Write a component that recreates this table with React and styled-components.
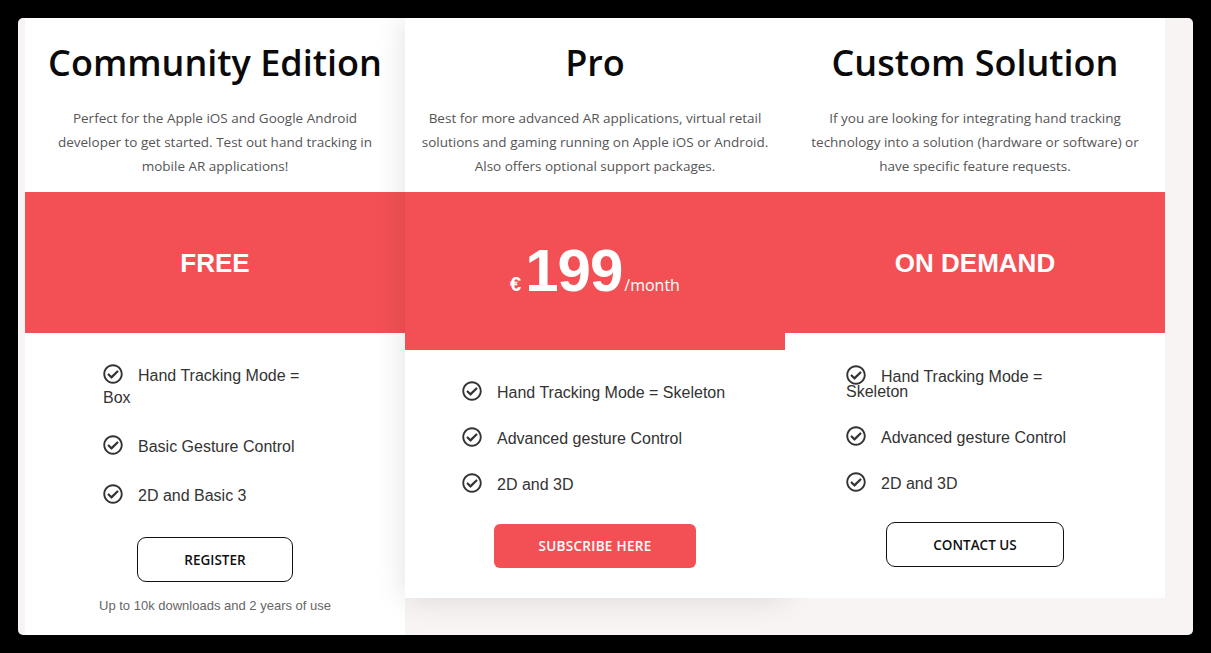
import React from "react";
import styled, { createGlobalStyle } from "styled-components";
import { FaRegCheckCircle } from "react-icons/fa";

const GlobalStyle = createGlobalStyle`
  html, body {
    margin: 0;
    padding: 0;
    background: #000;
  }
  * {
    box-sizing: border-box;
  }
`;

const Frame = styled.div`
  margin: 18px;
  width: 1175px;
  height: 617px;
  border-radius: 5px;
  background: #f8f4f4;
  overflow: hidden;
  display: flex;
  align-items: flex-start;
  padding-left: 7px;
`;

const Card = styled.div`
  position: relative;
  z-index: ${({ $z }) => $z || 0};
  width: 380px;
  flex-shrink: 0;
  align-self: ${({ $stretch }) => ($stretch ? "stretch" : "flex-start")};
  background: #fff;
  display: flex;
  flex-direction: column;
  align-items: center;
  padding: 19px 0 ${({ $pb }) => $pb || 30}px;
  box-shadow: ${({ $raised }) =>
    $raised ? "0 0 30px rgba(0, 0, 0, 0.12)" : "none"};

  & > * {
    flex-shrink: 0;
  }
`;

const Title = styled.h2`
  margin: 0;
  font-family: "Open Sans", sans-serif;
  font-weight: 600;
  font-size: 36px;
  line-height: 52px;
  color: #0a0a0a;
  white-space: nowrap;
`;

const Description = styled.p`
  margin: 17px 0 0;
  height: 72px;
  font-family: "Open Sans", sans-serif;
  font-weight: 400;
  font-size: 13.5px;
  line-height: 24px;
  color: #555;
  text-align: center;
  white-space: nowrap;
`;

const Band = styled.div`
  margin-top: 14px;
  align-self: stretch;
  height: ${({ $h }) => $h}px;
  background: #f35055;
  display: flex;
  align-items: center;
  justify-content: center;
  color: #fff;
`;

const BandLabel = styled.div`
  font-family: "Liberation Sans", Arial, sans-serif;
  font-weight: 700;
  font-size: 26px;
  line-height: 30px;
`;

const PriceRow = styled.div`
  display: flex;
  align-items: baseline;
  font-family: "Liberation Sans", Arial, sans-serif;
`;

const Currency = styled.span`
  font-weight: 700;
  font-size: 20px;
  margin-right: 4px;
`;

const Amount = styled.span`
  font-weight: 700;
  font-size: 60px;
  line-height: 1;
  letter-spacing: -1px;
`;

const Period = styled.span`
  font-family: "Open Sans", sans-serif;
  font-size: 16px;
  margin-left: 2px;
`;

const Features = styled.ul`
  list-style: none;
  margin: 0;
  align-self: stretch;
  padding: ${({ $pt }) => $pt}px ${({ $pr }) => $pr}px ${({ $pb }) => $pb}px
    ${({ $pl }) => $pl}px;
  display: flex;
  flex-direction: column;
  gap: ${({ $gap }) => $gap}px;
`;

const Feature = styled.li`
  font-family: "Liberation Sans", Arial, sans-serif;
  font-size: 16px;
  line-height: ${({ $lh }) => $lh}px;
  color: #333;

  svg {
    width: 20px;
    height: 20px;
    margin: -6px 15px -4px 0;
    vertical-align: 1.5px;
    color: #333;
  }
`;

const Button = styled.button`
  width: ${({ $w }) => $w}px;
  height: ${({ $h }) => $h || 45}px;
  border-radius: ${({ $solid }) => ($solid ? 6 : 9)}px;
  border: ${({ $solid }) => ($solid ? "none" : "1px solid #111")};
  background: ${({ $solid }) => ($solid ? "#f35055" : "#fff")};
  color: ${({ $solid }) => ($solid ? "#fff" : "#111")};
  font-family: "Open Sans", sans-serif;
  font-weight: 600;
  font-size: 13.5px;
  letter-spacing: ${({ $solid }) => ($solid ? "0.3px" : "0")};
  text-transform: uppercase;
  cursor: pointer;
  padding: 0;
`;

const Footnote = styled.p`
  margin: 16px 0 0;
  font-family: "Liberation Sans", Arial, sans-serif;
  font-size: 13px;
  line-height: 16px;
  color: #666;
`;

const plans = [
  {
    title: "Community Edition",
    lines: [
      "Perfect for the Apple iOS and Google Android",
      "developer to get started. Test out hand tracking in",
      "mobile AR applications!",
    ],
    band: { h: 141, label: "FREE" },
    features: ["Hand Tracking Mode = Box", "Basic Gesture Control", "2D and Basic 3"],
    list: { pt: 32, pr: 90, pb: 30, pl: 78, gap: 27, lh: 22 },
    button: { text: "Register", w: 156 },
    note: "Up to 10k downloads and 2 years of use",
    stretch: true,
  },
  {
    title: "Pro",
    lines: [
      "Best for more advanced AR applications, virtual retail",
      "solutions and gaming running on Apple iOS or Android.",
      "Also offers optional support packages.",
    ],
    band: { h: 158, price: "199" },
    features: ["Hand Tracking Mode = Skeleton", "Advanced gesture Control", "2D and 3D"],
    list: { pt: 32, pr: 40, pb: 28, pl: 57, gap: 24, lh: 22 },
    button: { text: "Subscribe here", w: 202, h: 44, solid: true },
    raised: true,
    z: 1,
  },
  {
    title: "Custom Solution",
    lines: [
      "If you are looking for integrating hand tracking",
      "technology into a solution (hardware or software) or",
      "have specific feature requests.",
    ],
    band: { h: 141, label: "ON DEMAND" },
    features: ["Hand Tracking Mode = Skeleton", "Advanced gesture Control", "2D and 3D"],
    list: { pt: 36, pr: 80, pb: 31, pl: 61, gap: 31, lh: 15 },
    button: { text: "Contact us", w: 178 },
    pb: 31,
    z: 2,
  },
];

const PlanCard = ({ plan }) => (
  <Card $stretch={plan.stretch} $raised={plan.raised} $z={plan.z} $pb={plan.pb}>
    <Title>{plan.title}</Title>
    <Description>
      {plan.lines.map((line, i) => (
        <React.Fragment key={i}>
          {line}
          {i < plan.lines.length - 1 && <br />}
        </React.Fragment>
      ))}
    </Description>
    <Band $h={plan.band.h}>
      {plan.band.price ? (
        <PriceRow>
          <Currency>€</Currency>
          <Amount>{plan.band.price}</Amount>
          <Period>/month</Period>
        </PriceRow>
      ) : (
        <BandLabel>{plan.band.label}</BandLabel>
      )}
    </Band>
    <Features
      $pt={plan.list.pt}
      $pr={plan.list.pr}
      $pb={plan.list.pb}
      $pl={plan.list.pl}
      $gap={plan.list.gap}
    >
      {plan.features.map((f) => (
        <Feature key={f} $lh={plan.list.lh}>
          <FaRegCheckCircle />
          {f}
        </Feature>
      ))}
    </Features>
    <Button $w={plan.button.w} $h={plan.button.h} $solid={plan.button.solid}>
      {plan.button.text}
    </Button>
    {plan.note && <Footnote>{plan.note}</Footnote>}
  </Card>
);

export default function App() {
  return (
    <>
      <GlobalStyle />
      <Frame>
        {plans.map((p) => (
          <PlanCard key={p.title} plan={p} />
        ))}
      </Frame>
    </>
  );
}
